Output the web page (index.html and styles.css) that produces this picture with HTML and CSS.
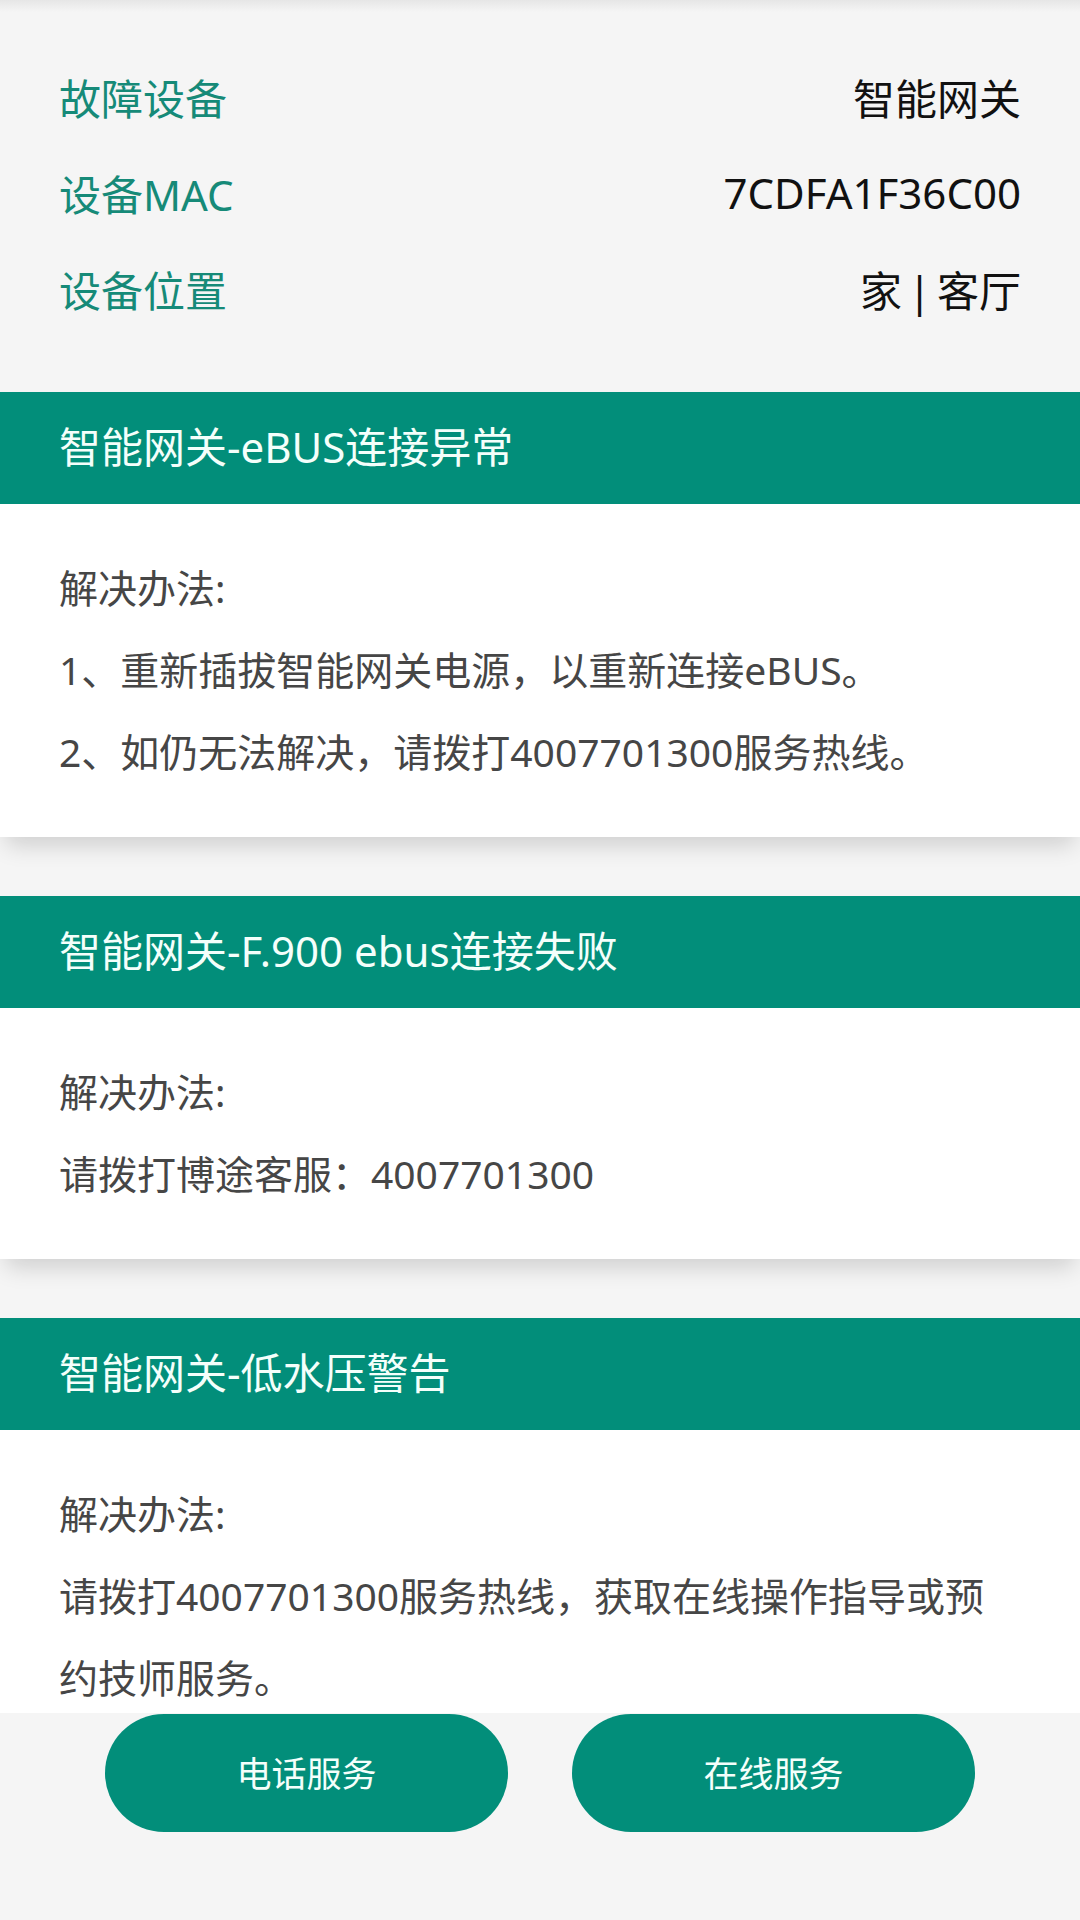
FILE: index.html
```html
<!DOCTYPE html>
<html lang="zh-CN">
<head>
  <meta charset="UTF-8" />
  <meta name="viewport" content="width=device-width, initial-scale=1.0"/>
  <title>故障详情</title>
  <link rel="stylesheet" href="styles.css">
</head>
<body>
  <div class="page">
    <div class="content">
      <!-- device info -->
      <div class="info">
        <div class="info-row">
          <span class="info-label">故障设备</span>
          <span class="info-value">智能网关</span>
        </div>
        <div class="info-row">
          <span class="info-label">设备MAC</span>
          <span class="info-value">7CDFA1F36C00</span>
        </div>
        <div class="info-row">
          <span class="info-label">设备位置</span>
          <span class="info-value">家 | 客厅</span>
        </div>
      </div>

      <!-- fault list -->
      <div class="fault">
        <div class="fault-title">智能网关-eBUS连接异常</div>
        <div class="fault-body">
          <p>解决办法:</p>
          <p>1、重新插拔智能网关电源，以重新连接eBUS。</p>
          <p>2、如仍无法解决，请拨打4007701300服务热线。</p>
        </div>
      </div>

      <div class="fault">
        <div class="fault-title">智能网关-F.900 ebus连接失败</div>
        <div class="fault-body">
          <p>解决办法:</p>
          <p>请拨打博途客服：4007701300</p>
        </div>
      </div>

      <div class="fault">
        <div class="fault-title">智能网关-低水压警告</div>
        <div class="fault-body">
          <p>解决办法:</p>
          <p>请拨打4007701300服务热线，获取在线操作指导或预约技师服务。</p>
        </div>
      </div>
    </div>

    <div class="footer">
      <button class="service-btn">电话服务</button>
      <button class="service-btn">在线服务</button>
    </div>
  </div>
</body>
</html>
```

FILE: styles.css
```css
* { box-sizing: border-box; }

body {
  margin: 0;
  font-family: "Noto Sans", "Noto Sans CJK SC", sans-serif;
  background-color: #f5f5f5;
}

.page {
  height: 1920px;
  display: flex;
  flex-direction: column;
}

.content {
  flex: 1 1 auto;
  min-height: 0;
  overflow: hidden;
}

/* device info block */
.info {
  padding: 48px 59px 56px;
  background: linear-gradient(#e6e6e6, #f5f5f5 12px);
}

.info-row {
  height: 96px;
  display: flex;
  align-items: center;
  justify-content: space-between;
  font-size: 42px;
}

.info-label { color: #168a78; }
.info-value { color: #111; word-spacing: -5px; }

/* fault cards */
.fault {
  background: #fff;
  margin-bottom: 59px;
  box-shadow: 0 14px 22px -6px rgba(0, 0, 0, 0.16);
}

.fault-title {
  height: 112px;
  display: flex;
  align-items: center;
  padding: 0 59px 8px;
  background: #028e7a;
  color: #f4fffb;
  font-size: 42px;
}

.fault-body {
  padding: 43px 59px 44px;
  color: #464646;
  font-size: 39px;
  line-height: 82px;
}

.fault-body p { margin: 0; }

/* bottom buttons */
.footer {
  flex: 0 0 207px;
  display: flex;
  justify-content: center;
  gap: 64px;
  padding-top: 1px;
  background: #f5f5f5;
}

.service-btn {
  width: 403px;
  height: 118px;
  border: none;
  border-radius: 59px;
  background: #028e7a;
  color: #f4fffb;
  font-family: inherit;
  font-size: 35px;
  padding-bottom: 4px;
  cursor: pointer;
}
```
